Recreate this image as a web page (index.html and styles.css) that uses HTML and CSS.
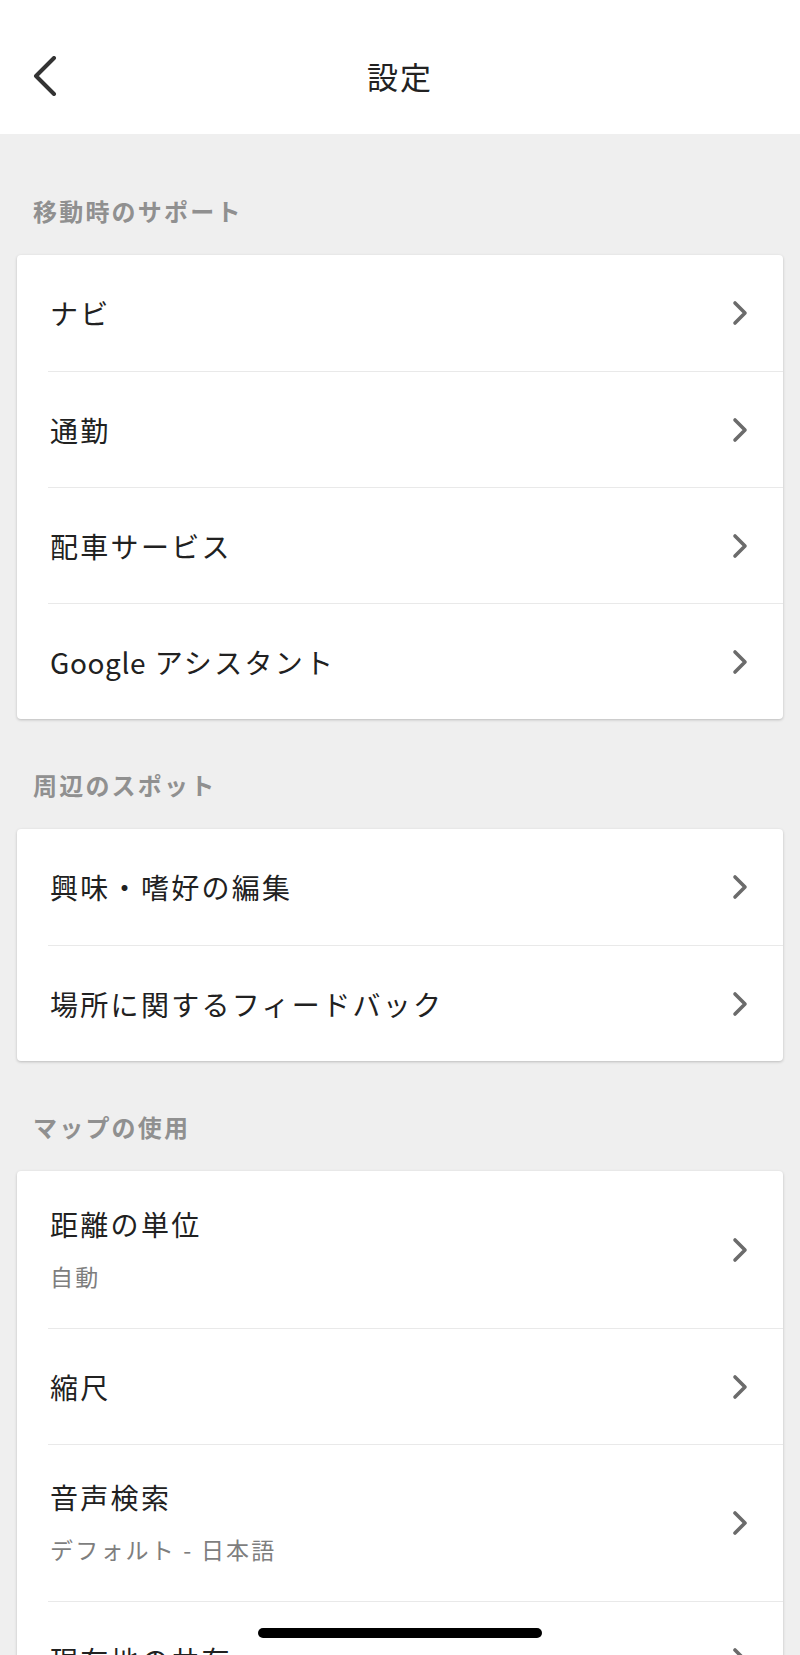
FILE: index.html
```html
<!DOCTYPE html>
<html lang="ja">
<head>
<meta charset="utf-8">
<title>設定</title>
<link rel="stylesheet" href="styles.css">
</head>
<body>
<header class="topbar">
  <span class="back">
    <svg width="28" height="40" viewBox="0 0 28 40"><path d="M23 2 L5 20 L23 38" fill="none" stroke="#333" stroke-width="4" stroke-linecap="round" stroke-linejoin="round"/></svg>
  </span>
  <h1 class="title">設定</h1>
</header>

<main class="content">
  <h2 class="section-title first">移動時のサポート</h2>
  <div class="card">
    <div class="row"><span class="label">ナビ</span><span class="chev"></span></div>
    <div class="row"><span class="label">通勤</span><span class="chev"></span></div>
    <div class="row"><span class="label">配車サービス</span><span class="chev"></span></div>
    <div class="row"><span class="label"><span class="latin">Google</span> アシスタント</span><span class="chev"></span></div>
  </div>

  <h2 class="section-title">周辺のスポット</h2>
  <div class="card">
    <div class="row"><span class="label">興味・嗜好の編集</span><span class="chev"></span></div>
    <div class="row"><span class="label">場所に関するフィードバック</span><span class="chev"></span></div>
  </div>

  <h2 class="section-title">マップの使用</h2>
  <div class="card">
    <div class="row tall"><span class="text"><span class="label">距離の単位</span><span class="sub">自動</span></span><span class="chev"></span></div>
    <div class="row"><span class="label">縮尺</span><span class="chev"></span></div>
    <div class="row tall"><span class="text"><span class="label">音声検索</span><span class="sub">デフォルト - 日本語</span></span><span class="chev"></span></div>
    <div class="row"><span class="label">現在地の共有</span><span class="chev"></span></div>
  </div>
</main>

<div class="home-indicator"></div>
</body>
</html>
```

FILE: styles.css
```css
html, body {
  margin: 0;
  padding: 0;
}
body {
  background: #efefef;
  font-family: "Noto Sans CJK JP", "Noto Sans", sans-serif;
  color: #212121;
  height: 1655px;
  overflow: hidden;
}
.topbar {
  height: 134px;
  background: #ffffff;
  display: flex;
  align-items: center;
  justify-content: center;
  position: relative;
}
.back {
  position: absolute;
  left: 31px;
  top: 56px;
  display: block;
  line-height: 0;
}
.title {
  margin: 0;
  font-size: 31px;
  font-weight: 400;
  letter-spacing: 2px;
  color: #222;
  line-height: 40px;
  padding-top: 18px;
}
.content {
  padding: 0 17px;
}
.section-title {
  margin: 48px 0 26px 16px;
  font-size: 24px;
  font-weight: 700;
  letter-spacing: 2.2px;
  line-height: 36px;
  color: #909090;
}
.section-title.first {
  margin-top: 59px;
}
.card {
  background: #ffffff;
  border-radius: 4px;
  box-shadow: 0 1px 3px rgba(0, 0, 0, 0.22);
  overflow: hidden;
}
.row {
  box-sizing: border-box;
  height: 116px;
  margin-left: 31px;
  padding-left: 2px;
  display: flex;
  align-items: center;
  justify-content: space-between;
  border-top: 1px solid #e9e9e9;
}
.row:first-child {
  border-top: none;
}
.row.tall {
  height: 157px;
}
.label {
  font-size: 28px;
  letter-spacing: 2.3px;
  line-height: 36px;
  color: #212121;
}
.latin {
  letter-spacing: 0.6px;
}
.text {
  display: flex;
  flex-direction: column;
  gap: 16px;
}
.sub {
  font-size: 23px;
  letter-spacing: 2.2px;
  line-height: 36px;
  color: #7e7e7e;
}
.chev {
  width: 16px;
  height: 26px;
  margin-right: 35px;
  background: no-repeat center / 16px 26px url("data:image/svg+xml,%3Csvg xmlns='http://www.w3.org/2000/svg' width='16' height='26' viewBox='0 0 16 26'%3E%3Cpath d='M3 3 L13 13 L3 23' fill='none' stroke='%236b6b6b' stroke-width='3.6' stroke-linecap='round' stroke-linejoin='round'/%3E%3C/svg%3E");
}
.home-indicator {
  position: fixed;
  left: 258px;
  bottom: 17px;
  width: 284px;
  height: 10px;
  border-radius: 5px;
  background: #000;
}
```
